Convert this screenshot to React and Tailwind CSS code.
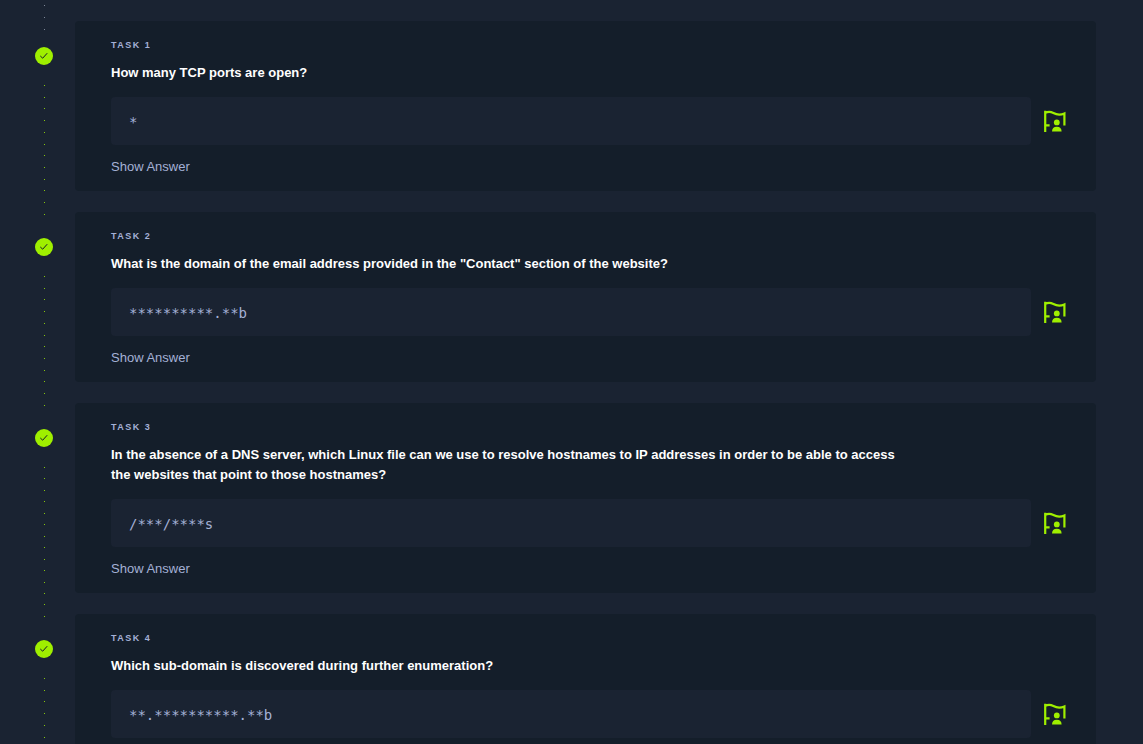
const TASKS = [
  { id: 1, dots: 12, question: "How many TCP ports are open?", hint: "*" },
  {
    id: 2,
    dots: 12,
    question: 'What is the domain of the email address provided in the "Contact" section of the website?',
    hint: "**********.**b",
  },
  {
    id: 3,
    dots: 14,
    question:
      "In the absence of a DNS server, which Linux file can we use to resolve hostnames to IP addresses in order to be able to access the websites that point to those hostnames?",
    hint: "/***/****s",
  },
  { id: 4, dots: 12, question: "Which sub-domain is discovered during further enumeration?", hint: "**.**********.**b" },
];

function FlagIcon() {
  return (
    <svg viewBox="0 0 24 24" className="size-6" fill="none" stroke="currentColor" strokeWidth="2.2" aria-hidden="true">
      <path d="M2.2 1.7V23M2.2 4C5 2.4 7.6 2.6 10.4 4C13.8 5.9 17 6.4 21.4 4.4V16.4M2.2 16.4H6.6" />
      <circle cx="13.8" cy="13.4" r="2.9" fill="currentColor" stroke="none" />
      <path d="M9 22.6C9 19.4 10.6 17.7 13.8 17.7S18.6 19.4 18.6 22.6Z" fill="currentColor" stroke="none" />
    </svg>
  );
}

function DoneBadge() {
  return (
    <span className="flex size-[18px] shrink-0 items-center justify-center rounded-full bg-[#9fef00] text-[#141d2b]">
      <svg viewBox="0 0 10 10" className="size-2.5" fill="none" stroke="currentColor" role="img" aria-label="Completed">
        <path d="M1.3 5L3.7 7.2L8.2 2.2" />
      </svg>
    </span>
  );
}

function Dots({ count, color }) {
  return (
    <div className="flex grow flex-col items-center justify-between">
      {Array.from({ length: count }, (_, i) => (
        <span key={i} className={"size-px " + color} />
      ))}
    </div>
  );
}

function Task({ task }) {
  const field = "answer-" + task.id;
  return (
    <li className="flex gap-[22px]">
      <div className="flex w-[18px] shrink-0 flex-col items-center pt-[26px]">
        <DoneBadge />
        <div className="-mb-6 flex grow flex-col pt-5">
          <Dots count={task.dots} color="bg-[#86c80c]" />
        </div>
      </div>
      <section className="min-w-0 grow rounded-sm bg-[#141e2a] pt-4 pr-[29px] pb-3.5 pl-9">
        <p className="text-[9px] leading-4 font-bold tracking-[1.5px] text-[#a4b1d6]">TASK {task.id}</p>
        <label htmlFor={field} className="mt-2.5 block max-w-[800px] text-[13px] leading-5 font-bold text-white">
          {task.question}
        </label>
        <div className="mt-3.5 flex items-center gap-3">
          <input
            id={field}
            readOnly
            value={task.hint}
            className="h-12 min-w-0 grow rounded-sm bg-[#1a2332] px-[18px] pt-0.5 font-['DejaVu_Sans_Mono',monospace] text-sm text-[#a4b1d6] outline-none"
          />
          <button type="button" aria-label="Flag owned" className="text-[#9fef00]">
            <FlagIcon />
          </button>
        </div>
        <button type="button" className="mt-3 block text-[13px] leading-5 text-[#a4b1d6]">
          Show Answer
        </button>
      </section>
    </li>
  );
}

export default function App() {
  return (
    <main className="h-screen overflow-y-auto bg-[#1a2332] pr-[47px] pb-8 pl-[35px] font-['Liberation_Sans',Arial,sans-serif] [scrollbar-width:none]">
      <div className="flex h-[21px] w-[18px] flex-col items-center">
        <div className="flex h-[30px] shrink-0 flex-col pt-[5px]">
          <Dots count={3} color="bg-[#7d8797]" />
        </div>
      </div>
      <ol className="flex flex-col gap-[21px]">
        {TASKS.map((task) => (
          <Task key={task.id} task={task} />
        ))}
      </ol>
    </main>
  );
}
